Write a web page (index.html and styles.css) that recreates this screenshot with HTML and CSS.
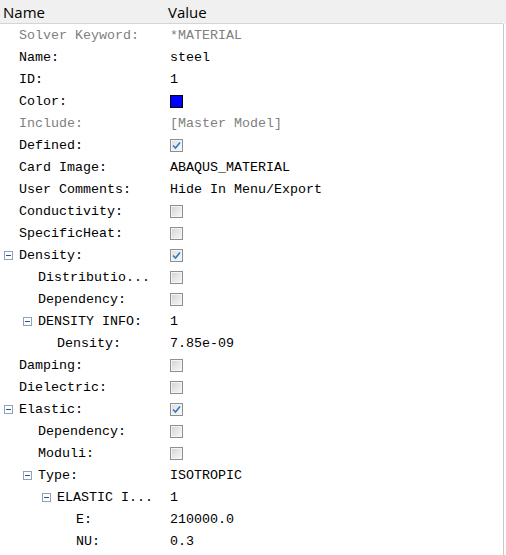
FILE: index.html
```html
<!DOCTYPE html>
<html>
<head>
<meta charset="utf-8">
<link rel="stylesheet" href="styles.css">
</head>
<body>
<div class="panel">
  <div class="header">
    <div class="h-name">Name</div>
    <div class="h-value">Value</div>
  </div>
  <div class="rows">
    <div class="row dim"><div class="name l0"><span class="slot"></span>Solver Keyword:</div><div class="val">*MATERIAL</div></div>
    <div class="row"><div class="name l0"><span class="slot"></span>Name:</div><div class="val">steel</div></div>
    <div class="row"><div class="name l0"><span class="slot"></span>ID:</div><div class="val">1</div></div>
    <div class="row"><div class="name l0"><span class="slot"></span>Color:</div><div class="val"><span class="swatch"></span></div></div>
    <div class="row dim"><div class="name l0"><span class="slot"></span>Include:</div><div class="val">[Master Model]</div></div>
    <div class="row"><div class="name l0"><span class="slot"></span>Defined:</div><div class="val"><span class="cb checked"><svg viewBox="0 0 9 9" width="9" height="9"><path d="M1 4.5 L3.5 7 L8 1.5" fill="none" stroke="#2b7cc4" stroke-width="1.6"/></svg></span></div></div>
    <div class="row"><div class="name l0"><span class="slot"></span>Card Image:</div><div class="val">ABAQUS_MATERIAL</div></div>
    <div class="row"><div class="name l0"><span class="slot"></span>User Comments:</div><div class="val">Hide In Menu/Export</div></div>
    <div class="row"><div class="name l0"><span class="slot"></span>Conductivity:</div><div class="val"><span class="cb"></span></div></div>
    <div class="row"><div class="name l0"><span class="slot"></span>SpecificHeat:</div><div class="val"><span class="cb"></span></div></div>
    <div class="row"><div class="name l0"><span class="slot"><span class="tog"></span></span>Density:</div><div class="val"><span class="cb checked"><svg viewBox="0 0 9 9" width="9" height="9"><path d="M1 4.5 L3.5 7 L8 1.5" fill="none" stroke="#2b7cc4" stroke-width="1.6"/></svg></span></div></div>
    <div class="row"><div class="name l1"><span class="slot"></span>Distributio...</div><div class="val"><span class="cb"></span></div></div>
    <div class="row"><div class="name l1"><span class="slot"></span>Dependency:</div><div class="val"><span class="cb"></span></div></div>
    <div class="row"><div class="name l1"><span class="slot"><span class="tog"></span></span>DENSITY INFO:</div><div class="val">1</div></div>
    <div class="row"><div class="name l2"><span class="slot"></span>Density:</div><div class="val">7.85e-09</div></div>
    <div class="row"><div class="name l0"><span class="slot"></span>Damping:</div><div class="val"><span class="cb"></span></div></div>
    <div class="row"><div class="name l0"><span class="slot"></span>Dielectric:</div><div class="val"><span class="cb"></span></div></div>
    <div class="row"><div class="name l0"><span class="slot"><span class="tog"></span></span>Elastic:</div><div class="val"><span class="cb checked"><svg viewBox="0 0 9 9" width="9" height="9"><path d="M1 4.5 L3.5 7 L8 1.5" fill="none" stroke="#2b7cc4" stroke-width="1.6"/></svg></span></div></div>
    <div class="row"><div class="name l1"><span class="slot"></span>Dependency:</div><div class="val"><span class="cb"></span></div></div>
    <div class="row"><div class="name l1"><span class="slot"></span>Moduli:</div><div class="val"><span class="cb"></span></div></div>
    <div class="row"><div class="name l1"><span class="slot"><span class="tog"></span></span>Type:</div><div class="val">ISOTROPIC</div></div>
    <div class="row"><div class="name l2"><span class="slot"><span class="tog"></span></span>ELASTIC I...</div><div class="val">1</div></div>
    <div class="row"><div class="name l3"><span class="slot"></span>E:</div><div class="val">210000.0</div></div>
    <div class="row"><div class="name l3"><span class="slot"></span>NU:</div><div class="val">0.3</div></div>
  </div>
</div>
</body>
</html>
```

FILE: styles.css
```css
html, body {
  margin: 0;
  padding: 0;
  background: #ffffff;
}
.panel {
  width: 506px;
  height: 555px;
  overflow: hidden;
  display: flex;
  flex-direction: column;
}
.header {
  height: 23px;
  background: #f0f0f0;
  border-bottom: 1px solid #d5d5d5;
  width: 503px;
  display: flex;
  align-items: center;
  font-family: "Open Sans", "Noto Sans", sans-serif;
  font-size: 15px;
  color: #000;
  box-shadow: 3px 0 0 #f0f0f0;
}
.h-name {
  width: 165px;
  padding-left: 3px;
}
.h-value {
  padding-left: 0;
}
.rows {
  width: 503px;
  border-right: 1px solid #c9c9c9;
  flex: 1;
  display: flex;
  flex-direction: column;
  font-family: "Liberation Mono", "DejaVu Sans Mono", monospace;
  font-size: 13.33px;
  color: #000;
}
.row {
  height: 22px;
  box-sizing: border-box;
  padding-top: 1px;
  display: flex;
  align-items: center;
  white-space: pre;
}
.row.dim {
  color: #808080;
}
.name {
  width: 170px;
  box-sizing: border-box;
  display: flex;
  align-items: center;
}
.name.l0 { padding-left: 4px; }
.name.l1 { padding-left: 23px; }
.name.l2 { padding-left: 42px; }
.name.l3 { padding-left: 61px; }
.slot {
  width: 15px;
  height: 20px;
  display: flex;
  align-items: center;
  flex: none;
}
.tog {
  width: 7px;
  height: 7px;
  border: 1px solid #8da2bd;
  background: #fff;
  position: relative;
}
.tog::after {
  content: "";
  position: absolute;
  left: 1px;
  top: 3px;
  width: 5px;
  height: 1px;
  background: #2f4f86;
}
.val {
  display: flex;
  align-items: center;
  padding-left: 0;
}
.swatch {
  width: 11px;
  height: 11px;
  background: #0000ff;
  border: 1px solid #000;
}
.cb {
  width: 11px;
  height: 11px;
  border: 1px solid #8e8f8f;
  background: linear-gradient(135deg, #d2d2d2 0%, #e8e8e8 55%, #f7f7f7 100%);
  box-shadow: inset 0 0 0 1px #f4f4f4;
  display: flex;
  align-items: center;
  justify-content: center;
}
.cb.checked {
  background: linear-gradient(135deg, #dcdcdc 0%, #f0f0f0 60%, #fbfbfb 100%);
}
.cb svg {
  display: block;
}
```
